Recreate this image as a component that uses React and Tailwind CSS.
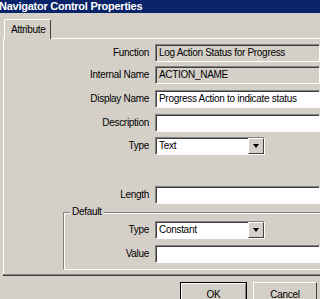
export default function App() {
  const sunken = 'border border-t-[#808080] border-l-[#808080] border-b-white border-r-white shadow-[inset_1px_1px_0_#404040]';

  const Label = ({ children }) => (
    <div className="w-[151px] shrink-0 text-right pr-[6px] leading-[18px]">{children}</div>
  );

  const Field = ({ value, grey, className = '' }) => (
    <div className={`h-[18px] ${sunken} ${grey ? 'bg-[#d4d0c8]' : 'bg-white'} pl-[3px] leading-[16px] whitespace-nowrap overflow-hidden ${className}`}>
      {value}
    </div>
  );

  const Select = ({ value }) => (
    <div className={`h-[18px] w-[110px] ${sunken} bg-white flex items-stretch`}>
      <div className="flex-1 pl-[3px] leading-[16px]">{value}</div>
      <div className="w-[16px] bg-[#d4d0c8] border border-t-white border-l-white border-b-[#404040] border-r-[#404040] flex items-center justify-center">
        <div className="w-0 h-0 border-l-[3.5px] border-r-[3.5px] border-t-[4px] border-l-transparent border-r-transparent border-t-black" />
      </div>
    </div>
  );

  return (
    <div
      className="w-[320px] h-[299px] overflow-hidden bg-[#d4d0c8] text-[10px] tracking-[-0.3px] text-black"
      style={{ fontFamily: '"Liberation Sans", Arial, sans-serif' }}
    >
      <div className="h-[13px] bg-[#0a246a] text-white font-bold text-[11px] tracking-[-0.25px] leading-[13px] -ml-[1px] whitespace-nowrap">
        Navigator Control Properties
      </div>

      <div className="pl-[3px] pt-[6px]">
        <div className="flex">
          <div className="ml-[1px] h-[20px] w-[47px] border-t border-l border-white border-r border-r-[#404040] rounded-t-[2px] pt-[3px] pl-[6px] leading-[14px] relative -mb-px bg-[#d4d0c8] z-10">
            Attribute
          </div>
        </div>
        <div className="border-t border-l border-white h-[236px] pt-[5px]">
          <div className="flex flex-col">
            <div className="flex h-[18px]">
              <Label>Function</Label>
              <Field value="Log Action Status for Progress" grey className="flex-1" />
            </div>
            <div className="flex h-[18px] mt-[4px]">
              <Label>Internal Name</Label>
              <Field value="ACTION_NAME" grey className="flex-1" />
            </div>
            <div className="flex h-[18px] mt-[6px]">
              <Label>Display Name</Label>
              <Field value="Progress Action to indicate status" className="flex-1" />
            </div>
            <div className="flex h-[18px] mt-[6px]">
              <Label>Description</Label>
              <Field value="" className="flex-1" />
            </div>
            <div className="flex h-[18px] mt-[5px]">
              <Label>Type</Label>
              <Select value="Text" />
            </div>
            <div className="flex h-[18px] mt-[31px]">
              <Label>Length</Label>
              <Field value="" className="flex-1" />
            </div>

            <div className="ml-[59px] mt-[8px] h-[58px] border border-t-[#808080] border-l-[#808080] border-b-white border-r-0 shadow-[inset_1px_1px_0_#fff] relative">
              <div className="absolute -top-[8px] left-[6px] px-[2px] bg-[#d4d0c8] leading-[14px]">Default</div>
              <div className="flex h-[18px] mt-[8px] -ml-[60px]">
                <Label>Type</Label>
                <Select value="Constant" />
              </div>
              <div className="flex h-[18px] mt-[6px] -ml-[60px]">
                <Label>Value</Label>
                <Field value="" className="flex-1" />
              </div>
            </div>
          </div>
        </div>
        <div className="border-t border-[#808080] shadow-[0_1px_0_#404040]" />
      </div>

      <div className="flex justify-end gap-[6px] pr-[3px] mt-[7px]">
        <div className="w-[67px] h-[24px] border border-black">
          <div className="h-full border border-t-white border-l-white border-b-[#808080] border-r-[#808080] flex items-center justify-center">OK</div>
        </div>
        <div className="w-[64px] h-[24px] border border-t-white border-l-white border-b-[#404040] border-r-[#404040] flex items-center justify-center">
          Cancel
        </div>
      </div>
    </div>
  );
}
